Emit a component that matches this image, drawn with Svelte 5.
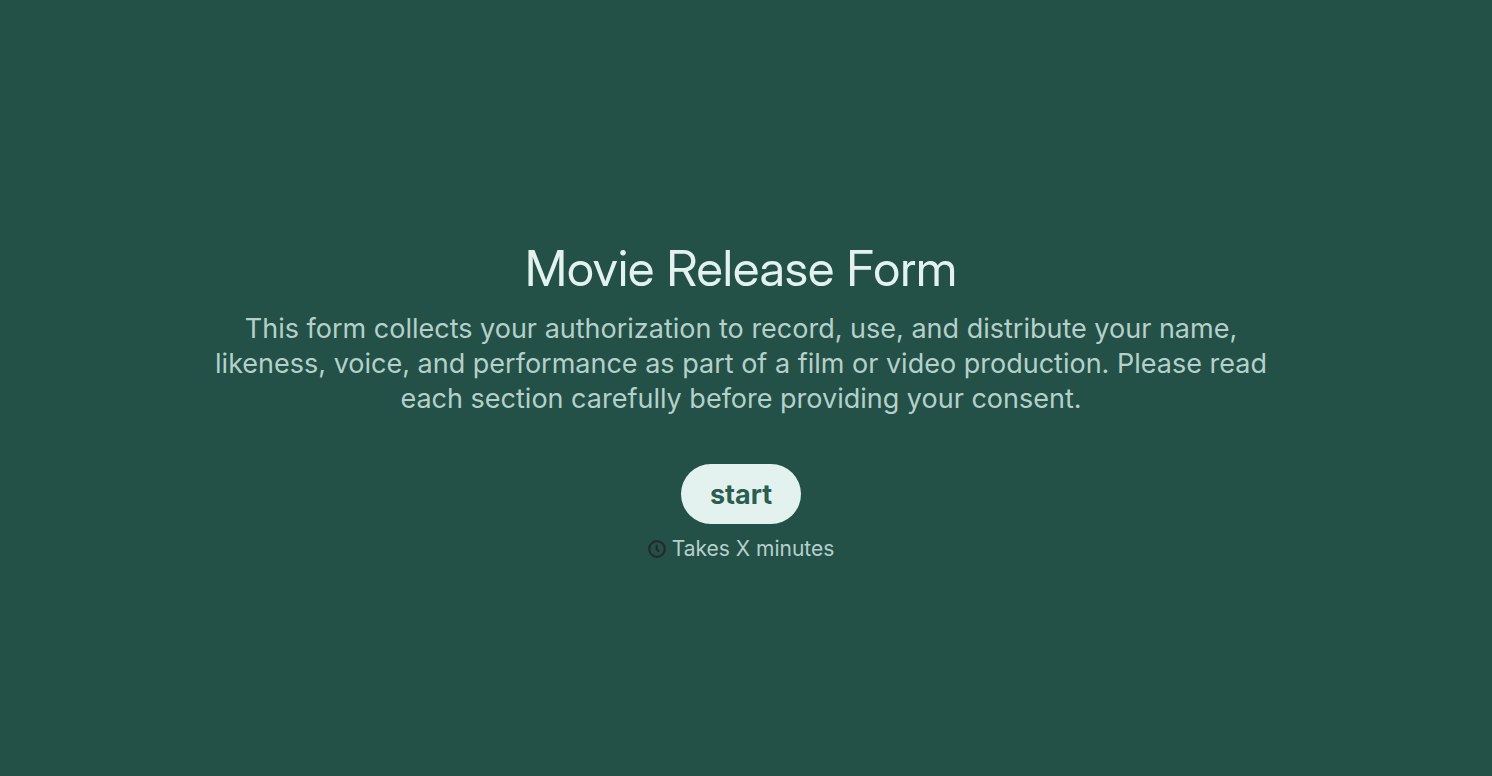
<script lang="ts">
  const title = "Movie Release Form";
  const description =
    "This form collects your authorization to record, use, and distribute your name, likeness, voice, and performance as part of a film or video production. Please read each section carefully before providing your consent.";
  const minutes = "X";
</script>

<main class="welcome">
  <div class="content">
    <h1 class="title">{title}</h1>
    <p class="description">{description}</p>
    <button class="start" type="button">start</button>
    <div class="duration">
      <svg class="clock" viewBox="0 0 18 18" aria-hidden="true">
        <circle cx="9" cy="9" r="7.8" />
        <path d="M8.7 4.8V9L11 11.7" />
      </svg>
      <span>Takes {minutes} minutes</span>
    </div>
  </div>
</main>

<style>
  :global(body) {
    margin: 0;
    background: #235147;
  }

  .welcome {
    min-height: 100vh;
    box-sizing: border-box;
    padding: 26px 10px 0 0;
    display: flex;
    align-items: center;
    justify-content: center;
    font-family: Inter, "Liberation Sans", sans-serif;
  }

  .content {
    width: 100%;
    max-width: 1060px;
    display: flex;
    flex-direction: column;
    align-items: center;
    text-align: center;
  }

  .title {
    margin: 0;
    color: #e4f2ef;
    font-family: "Inter Display", Inter, "Liberation Sans", sans-serif;
    font-size: 49px;
    font-weight: 400;
    line-height: 60px;
  }

  .description {
    margin: 12px 0 0;
    color: #b5d0ca;
    font-size: 27px;
    line-height: 35px;
  }

  .start {
    margin: 48px 0 0;
    padding: 0 29px;
    height: 60px;
    border: none;
    border-radius: 30px;
    background: #e4f2ef;
    color: #2b5d51;
    font-family: inherit;
    font-size: 27px;
    font-weight: 700;
    cursor: pointer;
  }

  .duration {
    margin-top: 11px;
    display: flex;
    align-items: center;
    gap: 6px;
    color: #b5d0ca;
    font-size: 21px;
    line-height: 28px;
  }

  .clock {
    width: 18px;
    height: 18px;
    fill: none;
    stroke: #252b2b;
    stroke-width: 2.2;
  }
</style>
